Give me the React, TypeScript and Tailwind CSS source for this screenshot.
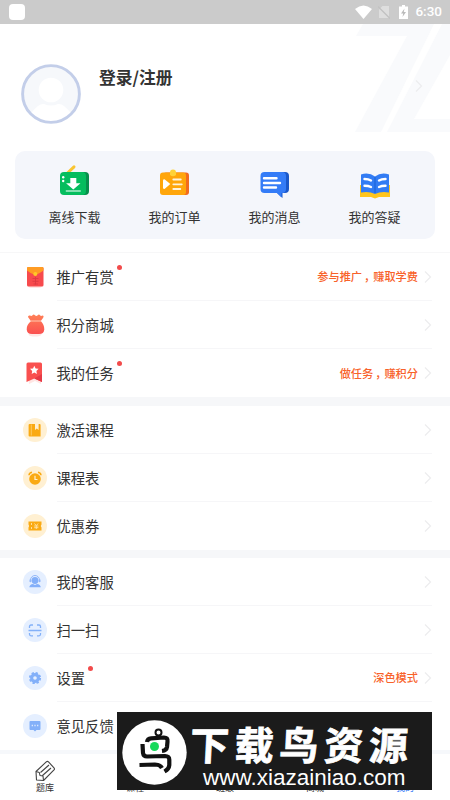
import React from "react";

const ArrowRight = () => (
  <svg className="h-3 w-2 shrink-0" viewBox="0 0 8 12" fill="none">
    <path d="M1 0.500L6.500 6L1 11.500" stroke="#ececee" strokeWidth="1.200" />
  </svg>
);

const DownloadIcon = () => (
  <svg className="h-[31px] w-[30px]" viewBox="0 0 30 31">
    <path d="M7.500 8L14 1.800" stroke="#f9c532" strokeWidth="3" strokeLinecap="round" />
    <rect x="3" y="7" width="26" height="23" rx="4" fill="#078f4c" />
    <rect x="0" y="7" width="26" height="23" rx="4" fill="#05bd5e" />
    <path d="M10.300 13h6v5.300h4.200L13.300 24.500L6.100 18.300h4.200z" fill="#fff" />
    <path d="M5.800 26h15" stroke="#c6f5dc" strokeWidth="1.300" />
    <circle cx="3.200" cy="12.200" r="1.200" fill="#fff" />
    <circle cx="3.200" cy="16" r="1.200" fill="#fff" />
  </svg>
);

const OrderIcon = () => (
  <svg className="h-[31px] w-[30px]" viewBox="0 0 30 31">
    <rect x="3" y="7.500" width="26" height="22.500" rx="3" fill="#f26b1e" />
    <rect x="0" y="7.500" width="26" height="22.500" rx="3" fill="#ffa60b" />
    <path d="M10 10V7.500a3 3 0 0 1 6 0V10q-3 2.500-6 0z" fill="#ffd238" />
    <path d="M4.500 14.300L10.300 19l-5.800 5q-1.500 0-1.500-1v-7.700q0-1 1.500-1z" fill="#fff" />
    <path d="M13.300 14.500h7.500M13.300 19.300h8.500M13.300 24h7" stroke="#fff3dc" strokeWidth="1.800" strokeLinecap="round" />
  </svg>
);

const MessageIcon = () => (
  <svg className="h-[31px] w-[30px]" viewBox="0 0 30 31">
    <path d="M7 7h18a4 4 0 0 1 4 4v13a4 4 0 0 1-4 4h-2.500v5L17 28H7z" fill="#1a58c9" />
    <path d="M4.500 7H22a4 4 0 0 1 4 4v13a4 4 0 0 1-4 4h-.5v4.500L17 28H4.500a4 4 0 0 1-4-4V11a4 4 0 0 1 4-4z" fill="#347cf7" />
    <path d="M4 13.300h12.500M4 18h16M4 22.500h12" stroke="#fff" strokeWidth="2.400" strokeLinecap="round" />
  </svg>
);

const AnswerIcon = () => (
  <svg className="h-[31px] w-[30px]" viewBox="0 0 30 31">
    <path d="M0 20h30v12h-11l-4 1.500-4-1.500H0z" fill="#ffc51c" />
    <path d="M1 9.500Q9 7 15 11.500Q21 7 29 9.500V27.500Q21 26 15 29Q9 26 1 27.500z" fill="#327cf4" />
    <path d="M15 12v16" stroke="#1761d5" strokeWidth="1" />
    <path d="M4.500 14q4 0 6.500 1.500M4.500 20.800q4 0 6.500 1.200M25.500 14q-4 0-6.500 1.500M25.500 20.800q-4 0-6.500 1.200" stroke="#fff" strokeWidth="2.400" fill="none" strokeLinecap="round" />
  </svg>
);

const EnvelopeIcon = () => (
  <svg className="h-6 w-6 overflow-visible" viewBox="0 0 24 24">
    <rect x="5" y="5" width="14" height="18" rx="3" fill="#ffe6e4" />
    <rect x="4" y="2" width="16.500" height="19.500" rx="1.500" fill="#f74a4d" />
    <path d="M5 2h14.500q1 0 1 1v2.500Q16 9 12.300 10 8 9 4 5.500V3q0-1 1-1z" fill="#ff9c24" />
    <circle cx="12.300" cy="9" r="2" fill="#ffc928" />
    <path d="M9.500 13.500h6M12.500 12v7.500M9.500 16.300h6M10.500 19h4.500" stroke="#dc3a42" strokeWidth="0.900" />
  </svg>
);

const BagIcon = () => (
  <svg className="h-6 w-6 overflow-visible" viewBox="0 0 24 24">
    <defs>
      <linearGradient id="bag" x1="0" y1="0" x2="0" y2="1">
        <stop offset="0" stopColor="#ff8057" />
        <stop offset="1" stopColor="#fa5050" />
      </linearGradient>
    </defs>
    <ellipse cx="12" cy="21.500" rx="6.500" ry="2" fill="#ffe6e4" />
    <path d="M5 4q0-2 2-1.500 1.500 1 2.500-.2 1-1.500 2.500 0 1.300 1.400 2.700 0 1.300-1.500 2.500.2 1 .8 2.200 0Q21.500 3 20 5l-2.200 3q3.700 4 3.500 8.500Q21 21 16 21H9q-5 0-5.300-4.500Q3.500 11.500 8 8.300z" fill="url(#bag)" />
    <path d="M7.500 8h10.500" stroke="#ffb49b" strokeWidth="1.300" />
  </svg>
);

const TaskIcon = () => (
  <svg className="h-6 w-6 overflow-visible" viewBox="0 0 24 24">
    <path d="M5 10h13v13l-6-3-6 3z" fill="#ffe6e4" />
    <path d="M5 1.500h12.500q1.500 0 1.500 1.500v18L11.300 17.500 3.500 21V3Q3.500 1.500 5 1.500z" fill="#f9504f" />
    <path d="M19 13v8L11.300 17.500z" fill="#e63a46" />
    <path d="M11.300 4.700l1.300 2.700 3 .4-2.200 2.100.5 3-2.600-1.400-2.600 1.400.5-3-2.200-2.100 3-.4z" fill="#fff" />
  </svg>
);

const BookIcon = () => (
  <svg className="h-6 w-6 rounded-full bg-[#fff0d2]" viewBox="0 0 24 24">
    <path d="M7.500 6h4.500v6l1.800-1.500L15.600 12V6h1q1 0 1 1v11.500h-11q-1 0-1-1V7q0-1 1.200-1z" fill="#faaa13" />
    <path d="M8.300 6.500v11" stroke="#ffd582" strokeWidth="0.700" />
  </svg>
);

const ClockIcon = () => (
  <svg className="h-6 w-6 rounded-full bg-[#fff0d2]" viewBox="0 0 24 24">
    <circle cx="12" cy="13" r="5.800" fill="#faaa13" />
    <path d="M6 9.200q.2-2.500 3-3M18 9.200q-.2-2.500-3-3" stroke="#faaa13" strokeWidth="1.500" fill="none" />
    <path d="M12 9.800v3.700h2.500" stroke="#fff0d2" strokeWidth="1.200" fill="none" />
  </svg>
);

const CouponIcon = () => (
  <svg className="h-6 w-6 rounded-full bg-[#fff0d2]" viewBox="0 0 24 24">
    <path d="M5.500 7.500h13v3q-1.500 1.500 0 3v3h-13v-3q1.300-1.500 0-3z" fill="#faaa13" />
    <path d="M8.500 9v2M8.500 13v2M11.500 9.500l1.800 2.200 1.800-2.200M11.200 12h4.200M11.200 13.700h4.200M13.300 12v3" stroke="#ffe3aa" strokeWidth="0.900" fill="none" />
  </svg>
);

const ServiceIcon = () => (
  <svg className="h-6 w-6 rounded-full bg-[#e5efff]" viewBox="0 0 24 24">
    <path d="M7.500 11V10a4.500 4.500 0 0 1 9 0v1" stroke="#91b7f9" strokeWidth="1" fill="none" />
    <circle cx="12" cy="10.500" r="3.400" fill="#83aff9" />
    <rect x="6.500" y="9.300" width="1.800" height="3" rx=".8" fill="#91b7f9" />
    <rect x="15.700" y="9.300" width="1.800" height="3" rx=".8" fill="#91b7f9" />
    <path d="M6.300 17.300q.4-3 3.700-3.300l2 1 2-1q3.400.3 3.800 3.300z" fill="#83aff9" />
  </svg>
);

const ScanIcon = () => (
  <svg className="h-6 w-6 rounded-full bg-[#e5efff]" viewBox="0 0 24 24">
    <path d="M6.500 10V8.500q0-1.500 1.500-1.500H10M14 7h2q1.500 0 1.500 1.500V10M6.500 15V16.300q0 1.500 1.500 1.500H10M14 17.800h2q1.500 0 1.500-1.500v-1.300M5.500 12.500h13" stroke="#83b1f9" strokeWidth="1.300" fill="none" />
  </svg>
);

const GearIcon = () => (
  <svg className="h-6 w-6 rounded-full bg-[#e5efff]" viewBox="0 0 24 24">
    <circle cx="12" cy="12" r="4.900" fill="#83b0f9" />
    <circle cx="12" cy="12" r="5.100" fill="none" stroke="#83b0f9" strokeWidth="2" strokeDasharray="2.300 1.705" />
    <circle cx="12" cy="12" r="1.800" fill="#e5efff" />
  </svg>
);

const FeedbackIcon = () => (
  <svg className="h-6 w-6 rounded-full bg-[#e5efff]" viewBox="0 0 24 24">
    <path d="M7.500 7h9q1 0 1 1v7q0 1-1 1h-3L12 17.500 10.500 16h-3q-1 0-1-1V8q0-1 1-1z" fill="#83b0f9" />
    <path d="M8.700 11.500h1.200M11.400 11.500h1.200M14.100 11.500h1.200" stroke="#e5efff" strokeWidth="1.300" />
  </svg>
);

const shortcuts = [
  { title: "离线下载", icon: <DownloadIcon /> },
  { title: "我的订单", icon: <OrderIcon /> },
  { title: "我的消息", icon: <MessageIcon /> },
  { title: "我的答疑", icon: <AnswerIcon /> },
];

type MenuItem = {
  title: string;
  icon: React.ReactNode;
  dot?: boolean;
  note?: string[];
};

const promoMenu: MenuItem[] = [
  { title: "推广有赏", icon: <EnvelopeIcon />, dot: true, note: ["参与推广", "赚取学费"] },
  { title: "积分商城", icon: <BagIcon /> },
  { title: "我的任务", icon: <TaskIcon />, dot: true, note: ["做任务", "赚积分"] },
];

const courseMenu: MenuItem[] = [
  { title: "激活课程", icon: <BookIcon /> },
  { title: "课程表", icon: <ClockIcon /> },
  { title: "优惠券", icon: <CouponIcon /> },
];

const serviceMenu: MenuItem[] = [
  { title: "我的客服", icon: <ServiceIcon /> },
  { title: "扫一扫", icon: <ScanIcon /> },
  { title: "设置", icon: <GearIcon />, dot: true, note: ["深色模式"] },
  { title: "意见反馈", icon: <FeedbackIcon /> },
];

const MenuGroup = ({ items }: { items: MenuItem[] }) => (
  <ul className="shrink-0 bg-white pl-[22.5px] pr-[18px]">
    {items.map((item, index) => (
      <li key={item.title} className="flex h-[48px] items-center">
        <span className="mr-[10px] shrink-0">{item.icon}</span>
        <div
          className={`flex h-full grow items-center ${
            index < items.length - 1 ? "border-b border-[#f6f6f8]" : ""
          }`}
        >
          <span className="relative text-[14.3px] leading-5 text-[#333]">
            {item.title}
            {item.dot && (
              <i className="absolute -right-2 -top-[2px] h-[5px] w-[5px] rounded-full bg-[#f24b4b]" />
            )}
          </span>
          <span className="ml-auto mr-[6px] flex text-[11.2px] font-medium text-[#f8622a]">
            {item.note && <span>{item.note[0]}</span>}
            {item.note && item.note[1] && (
              <>
                <span className="w-[11.2px] pl-[2px]">，</span>
                <span>{item.note[1]}</span>
              </>
            )}
          </span>
          <ArrowRight />
        </div>
      </li>
    ))}
  </ul>
);

const StatusBar = () => (
  <div className="flex h-6 shrink-0 items-center bg-[#cbcbcb] pl-[9px] pr-2">
    <span className="h-4 w-4 rounded bg-white" />
    <svg className="ml-auto h-[14px] w-[17px]" viewBox="0 0 17 14">
      <path d="M0 4Q8.500-3 17 4L8.500 14z" fill="#fff" />
    </svg>
    <svg className="ml-[6px] h-[14px] w-3" viewBox="0 0 12 14">
      <path d="M4.500 1H11v12H1V4.500z" fill="#dedede" />
      <path d="M0 1.500l12 12" stroke="#c2c2c2" strokeWidth="1.300" />
    </svg>
    <svg className="ml-[9px] h-[14px] w-[9px]" viewBox="0 0 9 14">
      <path d="M3 0h3v1.500h3V14H0V1.500h3z" fill="#fff" />
      <path d="M5.500 3.500L2 8.500h2.200L3.500 12 7 7H4.800z" fill="#bbb" />
    </svg>
    <span className="ml-[7px] font-[Roboto] text-[13.5px] font-medium leading-none text-white">6:30</span>
  </div>
);

const App = () => {
  return (
    <main className="relative flex h-[800px] w-[450px] flex-col overflow-hidden bg-white font-['Noto_Sans_CJK_SC',sans-serif]">
      <StatusBar />

      <header className="relative flex h-[127px] shrink-0 items-start pl-[20.5px] pt-10">
        <svg className="absolute right-0 top-0 h-[108px] w-[95px]" viewBox="0 0 95 108" fill="#f9fafc">
          <path d="M8 0H79L26 108H0L52 12H1z" />
          <path d="M87 0H95V31L59 95H95V108H32z" />
        </svg>
        <svg className="relative h-[60px] w-[60px]" viewBox="0 0 60 60">
          <circle cx="30" cy="30" r="28" fill="#f6f8fb" />
          <circle cx="30" cy="26" r="12.300" fill="#fff" />
          <path d="M10 49Q18 39 23 40q7 3 14 0 5-1 13 9-8 9-20 9T10 49z" fill="#fff" />
          <circle cx="30" cy="30" r="28.400" fill="none" stroke="#c3cee9" strokeWidth="2.900" />
        </svg>
        <h1 className="relative ml-[18.5px] mt-[1px] text-[16.800px] font-bold leading-6 text-[#333]">登录/注册</h1>
        <span className="relative ml-auto mr-[27px] mt-[16px]">
          <ArrowRight />
        </span>
      </header>

      <section className="mx-[15px] grid h-[88px] shrink-0 grid-cols-4 rounded-[10px] bg-[#f4f6fb] pl-[9.500px] pr-[10.500px] pt-[14px]">
        {shortcuts.map((item) => (
          <div key={item.title} className="flex flex-col items-center">
            <span className="h-[31px] [&>svg]:overflow-visible">{item.icon}</span>
            <p className="mt-[11px] text-[13px] leading-5 text-[#333]">{item.title}</p>
          </div>
        ))}
      </section>

      <div className="mt-[13px] shrink-0 border-t border-[#f7f7f8]">
        <MenuGroup items={promoMenu} />
      </div>
      <div className="h-[9px] shrink-0 bg-[#f6f7f9]" />
      <MenuGroup items={courseMenu} />
      <div className="h-[8px] shrink-0 bg-[#f6f7f9]" />
      <MenuGroup items={serviceMenu} />

      <nav className="mt-auto grid h-[51px] shrink-0 grid-cols-5 border-t-4 border-[#f6f8fb] bg-white text-center text-[9px] leading-3 text-[#333]">
        <div className="flex flex-col items-center pt-[6px]">
          <svg className="h-[22px] w-[22px]" viewBox="0 0 22 22" fill="none" stroke="#444" strokeWidth="1.100" strokeLinejoin="round">
            <path d="M2 11.500L12.500 1.700q1-.8 2 .2l5.500 6q.9 1 0 2L9.500 20.500 2.500 20z" />
            <path d="M2 11.500l3.300 1 .7 3 3 .5.500 4.500M6.500 12.500L15 5M8.500 15.500L17 8" />
          </svg>
          <span>题库</span>
        </div>
        <span className="pt-[28px]">课程</span>
        <span className="pt-[28px]">班级</span>
        <span className="pt-[28px]">商城</span>
        <span className="pt-[28px] text-[#347cf7]">我的</span>
      </nav>

      {/* site banner */}
      <aside className="absolute left-[117px] top-[712px] flex h-[78px] w-[315px] bg-[#1b1b1b] text-white">
        <svg className="ml-[5px] mt-2 h-[65px] w-[65px] shrink-0" viewBox="0 0 65 65">
          <circle cx="32.500" cy="32.500" r="32.200" fill="#fff" />
          <g fill="none" stroke="#111" strokeWidth="4.200" strokeLinejoin="round">
            <circle cx="36.500" cy="12.500" r="3" strokeWidth="2" />
            <path d="M25 22Q25.500 18.500 29 18.300L42 17.500Q46 17.500 45.500 21.500L45 27Q44.500 30.500 40 31" />
            <path d="M20.500 24L21 33Q21.500 36.500 25 36.500L43 36Q47.500 36 47.300 40V45Q47 49 42.500 51.500" />
            <path d="M17.500 45L33 44.500Q38 44.500 40 48" />
          </g>
          <circle cx="32.500" cy="26.500" r="4.500" fill="#18d95b" />
        </svg>
        <div className="flex grow flex-col items-start pl-[3px]">
          <strong className="mt-[9px] -skew-x-3 whitespace-nowrap text-[39px] font-bold leading-[45px] tracking-[5.800px]">
            <span className="inline-block [-webkit-text-stroke:0.8px_white]">下载鸟资源</span>
          </strong>
          <span className="ml-[13px] text-[22.500px] leading-[23px] font-['Liberation_Sans']">www.xiazainiao.com</span>
        </div>
      </aside>
    </main>
  );
};

export default App;
